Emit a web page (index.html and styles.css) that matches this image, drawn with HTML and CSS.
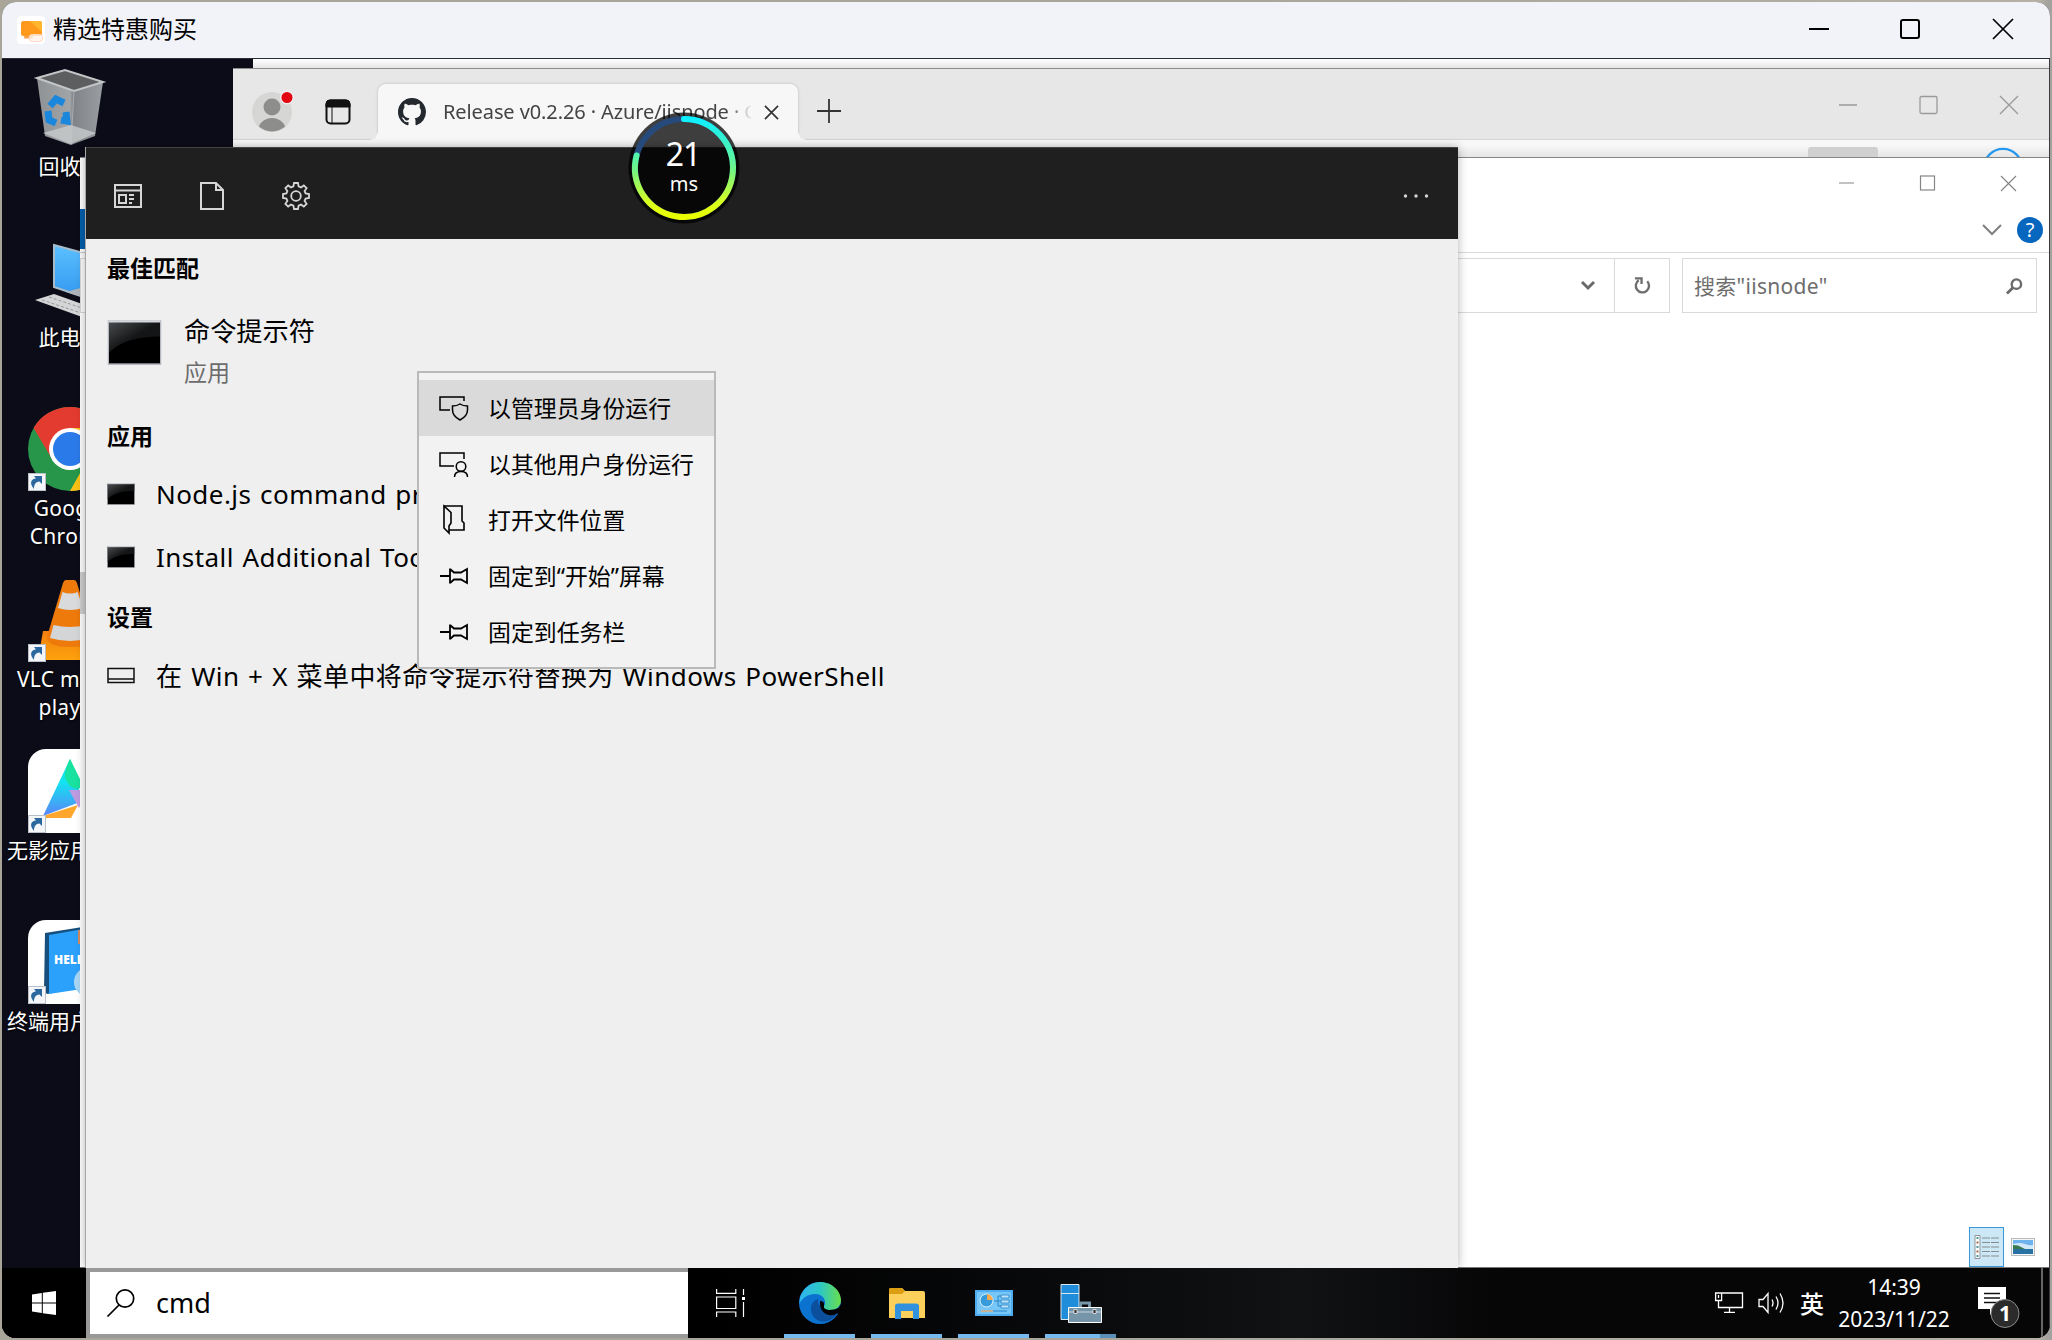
FILE: index.html
```html
<!DOCTYPE html>
<html lang="zh-CN">
<head>
<meta charset="utf-8">
<title>精选特惠购买</title>
<link rel="stylesheet" href="styles.css">
</head>
<body>
<svg class="defs" width="0" height="0">
  <defs>
    <linearGradient id="bin" x1="0" x2="1"><stop offset="0" stop-color="#8f9295"/><stop offset=".5" stop-color="#a2a5a8"/><stop offset=".55" stop-color="#808387"/><stop offset="1" stop-color="#9a9da1"/></linearGradient>
    <linearGradient id="scr" x1="0" y1="0" x2="0" y2="1"><stop offset="0" stop-color="#5cc0ff"/><stop offset="1" stop-color="#2e94ee"/></linearGradient>
    <linearGradient id="term" x1="0" y1="0" x2="1" y2="1"><stop offset="0" stop-color="#4a4d50"/><stop offset=".5" stop-color="#141516"/></linearGradient>
    <linearGradient id="edgeTop" x1="0" x2="1"><stop offset="0" stop-color="#31b5f0"/><stop offset=".5" stop-color="#2cc7c5"/><stop offset="1" stop-color="#6ade4b"/></linearGradient>
    <linearGradient id="app" x1="0" y1="0" x2="0" y2="1"><stop offset="0" stop-color="#11e3d3"/><stop offset=".4" stop-color="#12e4f2"/><stop offset="1" stop-color="#5a84f8"/></linearGradient>
    <linearGradient id="cone" x1="0" x2="0" y1="0" y2="1"><stop offset="0" stop-color="#f08010"/><stop offset="1" stop-color="#ffa20c"/></linearGradient>
    <symbol id="terminal" viewBox="0 0 54 41" preserveAspectRatio="none"><rect width="54" height="41" fill="#b4b8be"/><rect x="1.5" y="1.5" width="51" height="38" fill="#000"/><path d="M1.5 1.5h51V15C34 15 14 18 1.500 30z" fill="url(#term)"/><path d="M1 1.200h52" stroke="#d4d7db" stroke-width="2"/></symbol>
    <symbol id="link" viewBox="0 0 18 18"><rect x=".5" y=".5" width="17" height="17" fill="#f3f5f8" stroke="#b9c0c8"/><path d="M6 16C1 10 3 6 8 5.500L6 3h8v8l-2.500-2.500C7 9 6 12 6 16z" fill="#2b679f"/></symbol>
    <symbol id="pin" viewBox="0 0 30 30"><path d="M1 15h10M11 7.500v15M11 8l4 3.500h7l6-3.500v14l-6-3.500h-7l-4 3.500" fill="none" stroke="#000" stroke-width="1.800"/></symbol>
  </defs>
</svg>
<main class="window">
  <header class="titlebar">
    <svg class="app-icon" viewBox="0 0 28 28"><rect width="28" height="28" rx="4" fill="#fff"/><rect x="4" y="5" width="21" height="15" rx="2.500" fill="#ff9a1c"/><path d="M13 5h10a2 2 0 0 1 2 2v9z" fill="#ffb52e"/><rect x="7" y="20" width="9" height="2.500" rx="1" fill="#f8a04a"/><rect x="12" y="18.500" width="14" height="7" rx="3.500" fill="#fff3ea" fill-opacity=".8" stroke="#ffd9c6"/></svg>
    <h1>精选特惠购买</h1>
    <svg class="controls" viewBox="0 0 210 24" fill="none" stroke="#000" stroke-width="2"><path d="M1 12h20"/><rect x="93" y="3" width="18" height="18" rx="2"/><path d="M185 2l20 20M205 2l-20 20" stroke-width="1.700"/></svg>
  </header>
  <section class="desktop">
    <div class="icon i1">
      <svg viewBox="0 0 84 84"><path d="M9 9l37 12 29-8-8 54-24 9-26-9z" fill="url(#bin)"/><path d="M9 9L37 1l38 12-29 9z" fill="#5d5e60" stroke="#c3c5c7" stroke-width="2"/><path d="M46 22l-3 53" stroke="#a9acb0"/><path d="M15 64l28-8 25 8-25 11z" fill="#c8cacc" opacity=".8"/><g fill="none" stroke="#1b87dc" stroke-width="7"><path d="M22 37l6-7 8 4"/><path d="M20 42l1 9 7 3"/><path d="M33 51l6 1-1-9"/></g></svg>
      <p>回收站</p>
    </div>
    <div class="icon i2">
      <svg viewBox="0 0 84 84"><path d="M26 5l48 13v45L26 47z" fill="url(#scr)" stroke="#a6bccb" stroke-width="2"/><path d="M38 52l18-5 22 8-6 8z" fill="#aeb4ba"/><path d="M7 60l19-6 48 17-20 6z" fill="#d3d5d7"/><path d="M14 60l42 14M21 57l42 14" stroke="#999" stroke-dasharray="3 2"/></svg>
      <p>此电脑</p>
    </div>
    <div class="icon i3">
      <svg viewBox="0 0 84 84"><circle cx="42" cy="42" r="42" fill="#27964a"/><path d="M5.600 21A42 42 0 0 1 78.400 21H42L24 52z" fill="#e43b30"/><path d="M78.400 21A42 42 0 0 1 42 84L60 52 42 21z" fill="#fbc116"/><circle cx="42" cy="42" r="21" fill="#fff"/><circle cx="42" cy="42" r="17" fill="#2a7aea"/><use href="#link" x="0" y="66" width="18" height="18"/></svg>
      <p>Google<br>Chrome</p>
    </div>
    <div class="icon i4">
      <svg viewBox="0 0 84 84"><path d="M15 53h54l10 29H10z" fill="url(#cone)"/><path d="M38 2h8q2 0 3 3l16 54q0 10-23 10t-23-10L35 5q1-3 3-3z" fill="#ee7a0c"/><path d="M34.500 14q8 3 15 0L55 30q-13 4-25 0z" fill="#d9dadb"/><path d="M25.500 47q16 4 33 0l3.500 13q-20 6-40 0z" fill="#d4d5d6"/><use href="#link" x="0" y="66" width="18" height="18"/></svg>
      <p>VLC media<br>player</p>
    </div>
    <div class="icon i5">
      <svg viewBox="0 0 84 84"><rect width="84" height="84" rx="18" fill="#fff"/><path d="M0 60v24h40V60z" fill="#fff"/><path d="M42 10l8 18 2 25-37 14z" fill="url(#app)"/><path d="M42 10l14 28q-14 6-19-10 0-8 5-18z" fill="#19e1a0"/><path d="M41 41h20l-10 18z" fill="#bd9be0"/><path d="M15 67l35-11-7 13H15z" fill="#ffa62d"/><use href="#link" x="0" y="66" width="18" height="18"/></svg>
      <p>无影应用中心</p>
    </div>
    <div class="icon i6">
      <svg viewBox="0 0 84 84"><rect width="84" height="84" rx="18" fill="#fff"/><path d="M0 60v24h40V60z" fill="#fff"/><path d="M17 13l50-8v60l-48 9-3-3z" fill="#164f7d"/><path d="M21 15l46-8v60l-46 7z" fill="#2ba1fb"/><path d="M50 10h10v14H50z" fill="#d58a60"/><circle cx="61" cy="62" r="15" fill="#a9d7f5"/><text x="26" y="44" class="book">HELLO</text><use href="#link" x="0" y="66" width="18" height="18"/></svg>
      <p>终端用户指南</p>
    </div>

    <div class="backdrop"></div>

    <section class="browser">
      <div class="tabstrip">
        <svg class="avatar" viewBox="0 0 50 44"><circle cx="20" cy="23" r="20" fill="#d6d6d5"/><clipPath id="av"><circle cx="20" cy="23" r="19.500"/></clipPath><g fill="#8d8d8b" clip-path="url(#av)"><circle cx="20" cy="18" r="8.500"/><ellipse cx="20" cy="42" rx="14" ry="13"/></g><circle cx="35" cy="8.500" r="7" fill="#eee"/><circle cx="35" cy="8.500" r="5.500" fill="#e30613"/></svg>
        <svg class="workspaces" viewBox="0 0 26 26"><rect x="1.500" y="1.500" width="23" height="23" rx="4" fill="none" stroke="#111" stroke-width="2"/><path d="M1 8V5q0-4 4-4h16q4 0 4 4v3zM7 8v17" stroke="#111" fill="#111"/></svg>
        <div class="tab">
          <svg class="github" viewBox="0 0 16 16"><path fill="#24292f" d="M8 0C3.580 0 0 3.580 0 8c0 3.540 2.290 6.530 5.470 7.590.4.070.55-.17.55-.38 0-.19-.01-.82-.01-1.490-2.010.37-2.530-.49-2.690-.94-.09-.23-.48-.94-.82-1.130-.28-.15-.68-.52-.01-.53.63-.01 1.080.58 1.230.82.72 1.210 1.870.87 2.330.66.07-.52.28-.87.51-1.070-1.780-.2-3.640-.89-3.640-3.950 0-.87.31-1.590.82-2.150-.08-.2-.36-1.020.08-2.120 0 0 .67-.21 2.200.82.64-.18 1.320-.27 2-.27s1.360.09 2 .27c1.530-1.040 2.200-.82 2.200-.82.44 1.100.16 1.920.08 2.120.51.56.82 1.270.82 2.150 0 3.070-1.870 3.750-3.650 3.950.29.25.54.73.54 1.480 0 1.070-.01 1.930-.01 2.200 0 .21.15.46.55.38A8.010 8.010 0 0 0 16 8c0-4.420-3.580-8-8-8z"/></svg>
          <span class="tab-title">Release v0.2.26 · Azure/iisnode · GitHub</span>
          <svg class="x" viewBox="0 0 16 16"><path d="M1 1l14 14M15 1L1 15" stroke="#333" stroke-width="1.800"/></svg>
        </div>
        <svg class="plus" viewBox="0 0 24 24"><path d="M0 12h24M12 0v24" stroke="#333" stroke-width="1.800"/></svg>
        <svg class="controls" viewBox="0 0 180 20" fill="none" stroke="#9a9a98" stroke-width="1.300"><path d="M1 10h18"/><rect x="82" y="1.500" width="17" height="17" rx="1.500"/><path d="M162 1l18 18M180 1l-18 18"/></svg>
      </div>
      <div class="toolbar">
        <svg class="bing" viewBox="0 0 44 20"><circle cx="22" cy="23" r="21" fill="none" stroke="#2699ee" stroke-width="2.500"/><path d="M14 17v8l-2-9z" stroke="#1583e9" stroke-width="2"/></svg>
      </div>
    </section>

    <section class="explorer">
      <div class="ex-title">
        <svg viewBox="0 0 178 18" fill="none" stroke="#858585" stroke-width="1.200"><path d="M0 8h15"/><rect x="81.500" y="1" width="14" height="14"/><path d="M162 1l15 15M177 1l-15 15"/></svg>
      </div>
      <div class="ribbon">
        <svg class="chev" viewBox="0 0 20 12"><path d="M1 1l9 9 9-9" fill="none" stroke="#808080" stroke-width="2"/></svg>
        <span class="help">?</span>
      </div>
      <div class="address-row">
        <div class="address"><svg viewBox="0 0 14 10"><path d="M1 1l6 6 6-6" fill="none" stroke="#6b6b6b" stroke-width="3"/></svg></div>
        <div class="refresh"><svg viewBox="0 0 18 18"><path d="M14 4.500A7 7 0 1 1 5 3.500" fill="none" stroke="#6e6e6e" stroke-width="2.500"/><path d="M1 1.500h7v6" fill="none" stroke="#6e6e6e" stroke-width="2.500"/></svg></div>
        <div class="ex-search"><span>搜索"iisnode"</span><svg viewBox="0 0 18 18"><circle cx="11" cy="6.500" r="5" fill="none" stroke="#6b6b6b" stroke-width="2.500"/><path d="M7.500 10L1 16.500" stroke="#6b6b6b" stroke-width="3"/></svg></div>
      </div>
      <div class="ex-body"></div>
      <div class="ex-status">
        <span class="view on"><svg viewBox="0 0 24 24"><path d="M0 .5h5v23H0z" fill="#fff" stroke="#8c9499"/><path d="M7 3h8M16 3h8M7 7.500h8M16 7.500h8M7 12h8M16 12h8M7 16.500h8M16 16.500h8M7 21h8M16 21h8" stroke="#858c90" stroke-width="1.200"/><path d="M1.500 3h2M1.500 12h2M1.500 21h2" stroke="#4d9a9a" stroke-width="2"/><path d="M1.500 7.500h2M1.500 16.500h2" stroke="#a06a4a" stroke-width="2"/></svg></span>
        <svg class="pic" viewBox="0 0 24 18"><rect width="24" height="18" fill="#b9bcbf"/><rect x="1" y="1" width="22" height="16" fill="#f4f6f7"/><rect x="2" y="2" width="20" height="14" fill="#6db3ee"/><path d="M2 6q7-2 12 0t8 1v4H2z" fill="#d0e8f8"/><path d="M2 7l5 .5 8 4H2z" fill="#3b7a50"/><path d="M2 11h20v5H2z" fill="#2872a3"/></svg>
      </div>
      <i class="sliver blue"></i><i class="sliver rule"></i><i class="sliver thumb"></i>
    </section>

    <section class="search-panel">
      <div class="panel-head">
        <svg viewBox="0 0 28 28" fill="none" stroke="#d6d6d6" stroke-width="2"><path d="M1 3h26v22H1zM1 8.500h26"/><path d="M5 13h7v8H5zM15 13h5M15 17h5M15 21h3"/></svg>
        <svg viewBox="0 0 28 28" fill="none" stroke="#d6d6d6" stroke-width="2"><path d="M3 1h15l7 7v19H3zM18 1v7h7"/></svg>
        <svg viewBox="0 0 28 28" fill="none" stroke="#d6d6d6" stroke-width="1.800"><circle cx="14" cy="14" r="4.800"/><path d="M11.400 4.400L12 1h4l.6 3.400 2.400 1 2.800-2 2.800 2.800-2 2.800 1 2.400L27 12v4l-3.400.6-1 2.400 2 2.800-2.800 2.800-2.800-2-2.400 1L16 27h-4l-.6-3.400-2.400-1-2.800 2-2.800-2.800 2-2.800-1-2.400L1 16v-4l3.400-.6 1-2.400-2-2.800 2.800-2.800 2.800 2z"/></svg>
        <svg class="more" viewBox="0 0 28 28" fill="#d6d6d6"><circle cx="3.500" cy="14" r="1.700"/><circle cx="14" cy="14" r="1.700"/><circle cx="24.500" cy="14" r="1.700"/></svg>
      </div>
      <div class="results">
        <h2>最佳匹配</h2>
        <div class="best">
          <svg viewBox="0 0 54 45"><use href="#terminal" width="54" height="45"/></svg>
          <div><p class="name">命令提示符</p><p class="kind">应用</p></div>
        </div>
        <h2>应用</h2>
        <div class="hit"><svg viewBox="0 0 28 22"><use href="#terminal" width="28" height="22"/></svg><span>Node.js command prompt</span></div>
        <div class="hit second"><svg viewBox="0 0 28 22"><use href="#terminal" width="28" height="22"/></svg><span>Install Additional Tools for Node.js</span></div>
        <h2 class="settings">设置</h2>
        <div class="hit third"><svg viewBox="0 0 28 22"><path d="M1 3.500h26v14H1zM1 14h26" fill="none" stroke="#111" stroke-width="1.500"/></svg><span>在 Win + X 菜单中将命令提示符替换为 Windows PowerShell</span></div>
      </div>
    </section>

    <ul class="menu">
      <li class="hover"><svg viewBox="0 0 30 30" fill="none" stroke="#000" stroke-width="1.500"><path d="M11 17H1V4h24v4"/><path d="M21 11q3 2 7.500 2v4q0 6-7.500 10-7.500-4-7.500-10v-4q4.500 0 7.500-2z"/></svg>以管理员身份运行</li>
      <li><svg viewBox="0 0 30 30" fill="none" stroke="#000" stroke-width="1.500"><path d="M15 17H1V4h24v6"/><circle cx="22" cy="17.500" r="4.800"/><path d="M15.500 28q0-5.500 6.500-5.500t6.500 5.500"/></svg>以其他用户身份运行</li>
      <li><svg viewBox="0 0 30 30" fill="none" stroke="#000" stroke-width="1.600"><path d="M5 1h18v15l2 2v7H10"/><path d="M5 1v22l5 5v-7l2-3V7.500z"/></svg>打开文件位置</li>
      <li><svg><use href="#pin"/></svg>固定到<q>开始</q>屏幕</li>
      <li><svg><use href="#pin"/></svg>固定到任务栏</li>
    </ul>

    <div class="latency">
      <svg viewBox="0 0 112 112"><defs><linearGradient id="ring" x1="0" y1="0" x2="0" y2="1"><stop offset="0" stop-color="#0ff0ff"/><stop offset=".5" stop-color="#6cf58c"/><stop offset=".85" stop-color="#d8ff20"/><stop offset="1" stop-color="#eaff00"/></linearGradient></defs><circle cx="56" cy="56" r="55.500" fill="#000" opacity=".75"/><circle cx="56" cy="56" r="49" fill="none" stroke="#264a7c" stroke-width="6"/><path d="M56 7A49 49 0 1 1 8.600 43.500" fill="none" stroke="url(#ring)" stroke-width="6" stroke-linecap="round"/></svg>
      <p><b>21</b><span>ms</span></p>
    </div>

    <footer class="taskbar">
      <div class="start"><svg viewBox="0 0 24 24"><path d="M0 3.500L9.800 2v9.500H0zM10.800 1.800L24 0v11.500H10.800zM0 12.500h9.800V22L0 20.500zM10.800 12.500H24V24l-13.200-1.800z" fill="#fff"/></svg></div>
      <div class="searchbox"><svg viewBox="0 0 28 28" fill="none" stroke="#000" stroke-width="1.700"><circle cx="18" cy="9.500" r="8.700"/><path d="M12 16L0.500 27.500"/></svg><span>cmd</span></div>
      <div class="apps">
        <span class="app taskview"><svg viewBox="0 0 30 28" fill="none" stroke="#fff" stroke-width="1.200"><path d="M.6 0v4.400h19.200V0M.6 8h19.200v11.500H.6zM.6 28v-5h19.200v5M27.500 0v6M27.500 13v15"/><path d="M26 8h3v3h-3z" fill="#fff" stroke="none"/></svg></span>
        <span class="app open"><svg viewBox="0 0 42 42"><circle cx="21" cy="21" r="21" fill="#0b72d0"/><path d="M1 15C5 4 14 0 21 0c12 0 21 9 21 18 0 7-6 10-10 10-6 0-8-2-7-4 3-4 0-12-9-12C9 12 3 16 .3 22z" fill="url(#edgeTop)"/><path d="M19 17c-7 2-9 10-5 17 4 6 12 8 20 2 3-2 5-4 5-6-7 4-15 2-15-5-4 0-5-4-5-8z" fill="#0c4f9c"/><path d="M25 24q-1 3 5 4 6 0 9.500-2L42 22v12l-3-3q-6 4-12 1-7-4-6-13 5 0 4 5z" fill="#030303"/></svg></span>
        <span class="app open"><svg viewBox="0 0 42 42"><path d="M3 8q0-2 2-2h11l3 3h18q2 0 2 2v25H3z" fill="#fdd05b"/><path d="M3 8q0-2 2-2h11l3 3-3 3H3z" fill="#dc9f12"/><path d="M9 37V24q0-2.500 3-2.500h18q3 0 3 2.500v13h-6v-8H15v8z" fill="#3291dc"/></svg></span>
        <span class="app open"><svg viewBox="0 0 42 42"><rect x="2" y="8" width="38" height="26" fill="#4fabef"/><rect x="4" y="10" width="34" height="22" fill="#76c7f8"/><circle cx="13.500" cy="18.500" r="6.500" fill="#379ada" stroke="#d9effd"/><path d="M14 18v-6a6.500 6.500 0 0 1 6 6z" fill="#f9a94b"/><path d="M21 19h4v-5h3m-3 5h3m-3 0v5h3" stroke="#2c84c4" fill="none"/><path d="M28 13h8v3h-8zM28 18h8v3h-8zM28 23h8v3h-8z" fill="#bde3fb" stroke="#2c84c4" stroke-width=".8"/><path d="M8 29h12" stroke="#c4b29a" stroke-width="2"/><path d="M20 29h14" stroke="#2c84c4"/></svg></span>
        <span class="app open multi"><svg viewBox="0 0 42 42"><path d="M1 2.500h18v35H1z" fill="#208ddb" stroke="#dde7ee"/><path d="M1 11.500h18" stroke="#dde7ee"/><path d="M20.500 25v-4h9v4" fill="none" stroke="#7997ab" stroke-width="3"/><path d="M8.500 25.500h33v15h-33z" fill="#7695a9" stroke="#fff"/><path d="M9 30h32" stroke="#c9d5dd"/><path d="M14 27.500h3v4h-3zM33 27.500h3v4h-3z" fill="#333" stroke="#fff" stroke-width=".7"/></svg></span>
      </div>
      <div class="tray">
        <svg class="net" viewBox="0 0 28 22" fill="none" stroke="#fff" stroke-width="1.300"><path d="M7 1h20.500v14.500H3.500V8M14.500 16v4M9 20.300h11M.6 1h6v7.500h-6zM3.500 3v3"/></svg>
        <svg class="vol" viewBox="0 0 28 24" fill="none" stroke="#fff" stroke-width="1.300"><path d="M1 8.500h4l5-6v19l-5-6H1zM14 8.500q2 3.500 0 7M18 5.500q4 6.500 0 13M22 2.500q6 9.500 0 19"/></svg>
        <span class="ime">英</span>
        <p class="clock"><span>14:39</span><span>2023/11/22</span></p>
        <svg class="note" viewBox="0 0 42 42"><path d="M0 1h28v22h-9l-7 6v-6H0z" fill="#fff"/><path d="M6 7.500h16M6 12h16M6 16.500h16" stroke="#111" stroke-width="1.500"/><circle cx="27" cy="27.500" r="14" fill="#2b2b2b" stroke="#8a8a8a"/><text x="27" y="34.500" class="count">1</text></svg>
        <i class="peek"></i>
      </div>
    </footer>
  </section>
</main>
</body>
</html>
```
FILE: styles.css
```css
* { box-sizing: border-box; }
body { margin: 0; width: 2052px; height: 1340px; overflow: hidden; padding: 2px; background: linear-gradient(90deg, #a9a699 0, #a9a699 1200px, #b5b0a3 2040px, #a3a29f 2048px); font-family: "Noto Sans", "Noto Sans CJK SC", sans-serif; color: #000; }
h1, h2, p, ul { margin: 0; padding: 0; font-weight: 400; }
svg { display: block; flex: none; overflow: visible; }
.defs { position: absolute; }
.window { height: 1336px; border-radius: 14px; overflow: hidden; display: flex; flex-direction: column; background: #0c0c18; }
.titlebar { height: 57px; border-bottom: 1px solid #2a2c35; background: #f1f3f9; display: flex; align-items: center; padding: 0 32px 2px 15px; flex: none; }
.app-icon { width: 28px; height: 28px; margin-top: 2px; }
.titlebar h1 { font-size: 24px; line-height: 40px; margin: 0 auto 0 8px; }
.titlebar .controls { width: 210px; height: 24px; }
.desktop { position: relative; flex: 1; overflow: hidden; background: #0c0c18; border-right: 1px solid #3a3b40; }

/* desktop shortcuts */
.icon { position: absolute; left: -12px; width: 160px; display: flex; flex-direction: column; align-items: center; color: #fff; text-align: center; }
.icon svg { width: 84px; height: 84px; }
.icon p { font-size: 21px; line-height: 28px; margin-top: 3px; text-shadow: 1px 1px 2px #000; white-space: nowrap; }
.i1 { top: 10px; }
.i2 { top: 181px; }
.i1 p, .i2 p { margin-top: -1px; }
.i3 { top: 348px; }
.i4 { top: 519px; }
.i3 p, .i4 p { letter-spacing: .3px; }
.i5 { top: 690px; }
.i6 { top: 861px; }
.book { font: 900 12px "Open Sans", sans-serif; fill: #fff; }

.backdrop { position: absolute; left: 251px; top: 0; right: 0; height: 12px; background: linear-gradient(#fff, #e6e6e6 9px); }

/* browser window */
.browser { position: absolute; left: 231px; top: 9px; right: 0; height: 110px; border-top: 1px solid #8c8c8c; background: #f7f7f7; }
.tabstrip { height: 71px; background: #e7e7e7; border-bottom: 1px solid #d4d4d4; display: flex; align-items: flex-start; padding-right: 31px; }
.avatar { width: 50px; height: 44px; margin: 20px 0 0 19px; }
.workspaces { width: 26px; height: 26px; margin: 30px 0 0 23px; }
.tab { position: relative; margin: 15px 0 0 27px; width: 420px; height: 56px; border-radius: 8px 8px 0 0; background: #f7f7f7; box-shadow: 0 0 3px #bbb; clip-path: inset(-3px -8px 0); display: flex; align-items: center; padding: 0 19px 2px 20px; }
.tab::before, .tab::after { content: ""; position: absolute; bottom: 0; width: 7px; height: 7px; }
.tab::before { left: -7px; background: radial-gradient(circle at 0 0, #e7e7e7 6px, #f7f7f7 7px); }
.tab::after { right: -7px; background: radial-gradient(circle at 100% 0, #e7e7e7 6px, #f7f7f7 7px); }
.github { width: 28px; height: 28px; margin-top: 2px; }
.tab-title { margin-left: 17px; width: 309px; font-size: 20px; letter-spacing: -.1px; color: #444; white-space: nowrap; overflow: hidden; -webkit-mask-image: linear-gradient(90deg, #000 285px, transparent 309px); mask-image: linear-gradient(90deg, #000 285px, transparent 309px); }
.x { width: 15px; height: 15px; margin: 2px 0 0 auto; }
.plus { width: 24px; height: 24px; margin: 30px 0 0 19px; }
.tabstrip .controls { width: 180px; height: 20px; margin: 26px 0 0 auto; }
.toolbar { height: 18px; display: flex; justify-content: flex-end; padding-right: 24px; background: linear-gradient(#f8f8f8 5px, #e4e4e4); }
.toolbar::before { content: ""; width: 70px; height: 12px; background: #d0d0d0; margin: 7px 103px 0 0; border-radius: 3px 3px 0 0; }
.bing { width: 44px; height: 18px; margin-top: 7px; }

/* file explorer window */
.explorer { position: absolute; left: 78px; top: 98px; right: 0; bottom: 70px; background: #fff; border-top: 1px solid #858585; border-bottom: 1px solid #777; display: flex; flex-direction: column; }
.ex-title { height: 45px; display: flex; justify-content: flex-end; padding: 17px 32px 0 0; }
.ex-title svg { width: 178px; height: 18px; }
.ribbon { height: 50px; border-bottom: 1px solid #d9d9d9; display: flex; justify-content: flex-end; align-items: center; padding: 5px 6px 0 0; gap: 15px; }
.chev { width: 20px; height: 12px; }
.help { width: 26px; height: 26px; border-radius: 50%; background: #0766bd; color: #fff; font-size: 20px; line-height: 25px; text-align: center; }
.address-row { display: flex; margin: 5px 12px 0 0; height: 55px; }
.address-row > div { border: 1px solid #d9d9d9; display: flex; align-items: center; }
.address { flex: 1; justify-content: flex-end; padding-right: 19px; }
.address svg { width: 14px; height: 10px; }
.refresh { width: 56px; margin-left: -1px; justify-content: center; }
.refresh svg { width: 17px; height: 17px; }
.ex-search { width: 355px; margin-left: 12px; justify-content: space-between; padding: 0 13px 0 11px; color: #6d6d6d; font-size: 21px; letter-spacing: .3px; }
.ex-search span { padding-bottom: 2px; }
.ex-search svg { width: 17px; height: 17px; margin-top: 1px; }
.ex-body { flex: 1; }
.ex-status { height: 40px; display: flex; justify-content: flex-end; align-items: center; padding-right: 14px; gap: 7px; }
.view { width: 35px; height: 40px; border: 1px solid #3a97d9; background: #cce8f7; display: flex; align-items: center; justify-content: center; }
.view svg { width: 24px; height: 24px; }
.pic { width: 24px; height: 18px; }
.sliver { position: absolute; left: 0; width: 8px; }
.sliver.blue { top: 51px; height: 40px; background: #0460ae; }
.sliver.rule { top: 94px; height: 1px; background: #ccc; }
.sliver.thumb { top: 414px; height: 42px; background: #cfcfcf; }

/* search panel */
.search-panel { position: absolute; left: 83px; top: 88px; width: 1373px; bottom: 70px; border-left: 1px solid #a6a6a6; background: #efefef; box-shadow: 0 0 9px rgba(0,0,0,.3); display: flex; flex-direction: column; }
.panel-head { height: 92px; background: #1f1f1f; border-top: 1px solid #444; display: flex; align-items: center; padding: 4px 28px 0; gap: 56px; }
.panel-head svg { width: 28px; height: 28px; }
.panel-head .more { margin-left: auto; }
.results { padding: 12px 0 0 21px; }
h2 { font-size: 23px; line-height: 34px; font-weight: 700; }
.best { display: flex; height: 104px; margin: 20px 0 31px; gap: 22px; }
.best svg { width: 55px; height: 45px; margin-top: 15px; }
.best .name { font-size: 26.200px; line-height: 40px; margin-top: 6px; }
.best .kind { font-size: 23px; line-height: 34px; margin-top: 4px; color: #6c6c6c; }
.best + h2 { margin-top: -21px; }
.hit { display: flex; align-items: center; gap: 21px; height: 40px; font-size: 26px; letter-spacing: .44px; word-spacing: 1.500px; margin-top: 21px; white-space: nowrap; }
.hit svg { width: 28px; height: 22px; }
.hit.second { margin-top: 23px; }
h2.settings { margin-top: 23px; }
.hit.third { margin-top: 22px; }
.hit.third span { margin-top: -2px; }

/* context menu */
.menu { position: absolute; left: 415px; top: 312px; width: 299px; height: 298px; border: 2px solid #bababa; background: #f2f2f2; padding-top: 7px; list-style: none; }
.menu li { height: 56px; display: flex; align-items: center; padding: 0 0 3px 20px; font-size: 22.900px; white-space: nowrap; }
.menu .hover { background: #dadada; }
.menu svg { width: 30px; height: 30px; margin: 3px 19px 0 0; }
q { quotes: "“" "”"; }

/* latency gauge */
.latency { position: absolute; left: 626px; top: 53px; width: 112px; height: 112px; }
.latency > svg { width: 112px; height: 112px; }
.latency p { position: absolute; inset: 0; color: #fff; display: flex; flex-direction: column; align-items: center; padding-top: 22px; }
.latency b { font-size: 32px; line-height: 40px; font-weight: 400; letter-spacing: -1px; margin-left: -2px; }
.latency span { font-size: 20px; line-height: 20px; }

/* taskbar */
.taskbar { position: absolute; left: 0; right: 0; bottom: 0; height: 70px; background: linear-gradient(90deg, #000 700px, #0a0b0d 1100px, #111214 1300px, #060607 1500px, #060607); display: flex; }
.start { width: 84px; background: #000; display: grid; place-items: center; }
.start svg { width: 24px; height: 24px; }
.searchbox { width: 602px; background: #fff; border: 4px solid #999; border-right: 0; display: flex; align-items: center; padding-left: 17px; font-size: 27px; gap: 21px; }
.searchbox svg { width: 28px; height: 28px; }
.searchbox span { padding-bottom: 2px; }
.apps { display: flex; padding-left: 9px; gap: 16px; }
.app { width: 71px; height: 70px; display: grid; place-items: center; }
.app svg { width: 42px; height: 42px; }
.taskview svg { width: 30px; height: 28px; margin-right: 4px; }
.open { box-shadow: inset 0 -4px #76b9ed; }
.multi { background: linear-gradient(90deg, transparent 55px, #5a8fb8 55px) bottom / 100% 4px no-repeat; box-shadow: none; position: relative; }
.multi::after { content: ""; position: absolute; left: 0; bottom: 0; width: 55px; height: 4px; background: #76b9ed; }
.tray { margin-left: auto; display: flex; align-items: center; color: #fff; }
.net { width: 28px; height: 22px; margin-right: 15px; }
.vol { width: 28px; height: 24px; margin-right: 14px; }
.ime { font-size: 24px; font-weight: 500; padding-bottom: 2px; }
.clock { width: 116px; margin: 0 26px 0 12px; display: flex; flex-direction: column; align-items: center; font-size: 21px; line-height: 32px; white-space: nowrap; }
.note { width: 42px; height: 42px; margin-top: 7px; }
.count { font: 700 21px "Noto Sans", sans-serif; fill: #fff; text-anchor: middle; }
.peek { width: 2px; height: 70px; background: #666; margin: 0 6px 0 21px; }
```
